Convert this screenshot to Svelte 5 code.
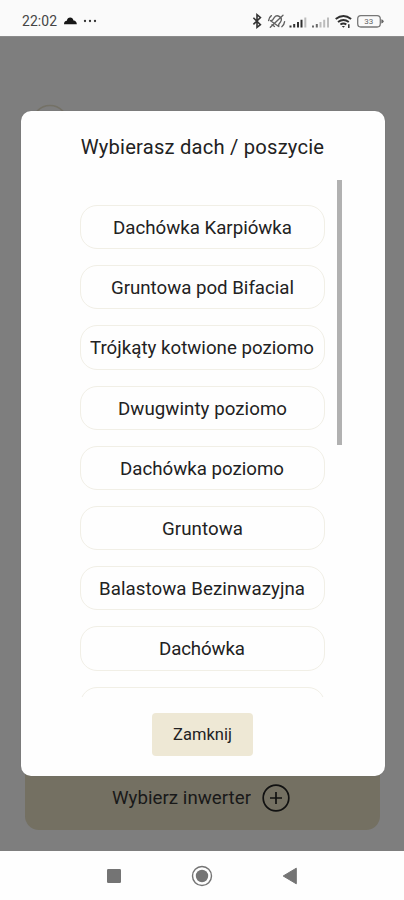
<script>
  const roofs = [
    { name: 'Dachówka Karpiówka', width: 179 },
    { name: 'Gruntowa pod Bifacial', width: 183 },
    { name: 'Trójkąty kotwione poziomo', width: 224 },
    { name: 'Dwugwinty poziomo', width: 169 },
    { name: 'Dachówka poziomo', width: 164 },
    { name: 'Gruntowa', width: 81 },
    { name: 'Balastowa Bezinwazyjna', width: 206 },
    { name: 'Dachówka', width: 86 },
    { name: '', width: 0 }
  ];
</script>

<div class="phone">
  <header class="status">
    <span class="clock">22:02</span>
    <svg class="cloud" width="13" height="8" viewBox="0 0 13 8"><path d="M0 7.3C0 5 1 4 2.8 3.8 3.3 1.5 4.4.5 6.2.5S9 1.5 9.5 3.4C11.7 3.6 12.8 5 12.8 7.3Z" fill="#171717" /></svg>
    <svg class="dots" width="14" height="4" viewBox="0 0 14 4" fill="#333"><circle cx="2" cy="2" r="1.15" /><circle cx="7" cy="2" r="1.15" /><circle cx="12" cy="2" r="1.15" /></svg>
    <svg class="system" width="134" height="20" viewBox="0 0 134 20" fill="none">
      <path d="M3.4 6.7 10.4 13.6 7 16.4V3.7L10.4 6.5 3.4 13.4" stroke="#333" stroke-width="1.6" />
      <g stroke="#606060" stroke-width="1.35" stroke-linecap="round" stroke-linejoin="round">
        <path transform="rotate(35 26.5 10)" d="M21.5 13.2H31.5L30.3 11.5V8.3C30.3 3.5 22.7 3.5 22.7 8.3V11.5ZM25 15.6H28" />
        <path d="M20.3 16.2 33 4.2M18.6 9.6Q18.8 6.4 21.4 4.6M34.6 10.6Q34.2 13.8 31.8 15.7" />
      </g>
      <g stroke-width="2">
        <path d="M40.5 16.5V14.5M44.2 16.5V13M48 16.5V11M51.5 16.5V8.7" stroke="#303030" />
        <path d="M55.3 16.5V6.5" stroke="#bcbcbc" />
        <path d="M63 16.5V14.5M66.8 16.5V13" stroke="#686868" />
        <path d="M70.5 16.5V11M74.2 16.5V8.7M78 16.5V6.5" stroke="#bcbcbc" />
      </g>
      <g stroke="#303030" stroke-width="1.9">
        <path d="M85.7 8.1Q93.5 1.9 101.1 8.1M88 11Q93.5 6.9 98.8 11M90.4 13.6Q93.5 11.3 96.3 13.6" />
        <path d="M91.8 15H95L93.4 16.7Z" fill="#303030" stroke="none" />
        <path d="M98.8 13.3V16.9" stroke-width="1.5" />
      </g>
      <rect x="107.7" y="4.7" width="22.6" height="11.3" rx="3.2" stroke="#777" stroke-width="1.3" />
      <path d="M131.3 8.2Q133.6 8.6 133.6 10.3T131.3 12.4Z" fill="#666" />
      <text x="118.7" y="13.2" text-anchor="middle" font-size="8" fill="#666">33</text>
    </svg>
  </header>

  <main>
    <svg class="hint" width="50" height="36" viewBox="0 0 50 36"><circle cx="25" cy="19" r="17.5" fill="none" stroke="#747166" stroke-width="1.5" /></svg>
    <div class="inverter">
      <svg class="label" width="139" height="28"><text x="0" y="20" textLength="139" font-size="18.7" fill="#191919">Wybierz inwerter</text></svg>
      <svg width="28" height="28" viewBox="0 0 28 28" fill="none" stroke="#111"><circle cx="14" cy="14" r="12.8" stroke-width="1.7" /><path d="M8 14H20M14 8V20" stroke-width="1.7" /></svg>
    </div>
  </main>

  <nav>
    <svg width="16" height="16"><rect x="1" y="1" width="14" height="14" rx="1.2" fill="#747474" /></svg>
    <svg width="22" height="22" viewBox="0 0 22 22"><circle cx="11" cy="11" r="9.5" fill="none" stroke="#747474" stroke-width="1.4" /><circle cx="11" cy="11" r="6.2" fill="#747474" /></svg>
    <svg width="16" height="18" viewBox="0 0 16 18"><path d="M14.3 1.2V16.8L1.2 9Z" fill="#747474" stroke="#747474" stroke-linejoin="round" /></svg>
  </nav>

  <section class="modal">
    <h1>Wybierasz dach / poszycie</h1>
    <div class="scroll">
      <div class="list">
        {#each roofs as roof}
          <button class="roof">
            {#if roof.name}
              <svg width={roof.width} height="28"><text x="0" y="20.6" textLength={roof.width} font-size="18.7" fill="#222">{roof.name}</text></svg>
            {/if}
          </button>
        {/each}
      </div>
      <div class="thumb"></div>
    </div>
    <button class="close">Zamknij</button>
  </section>
</div>

<style>
  :global(body) { margin: 0; overflow: hidden; }
  * { box-sizing: border-box; }
  .phone { position: relative; width: 404px; height: 900px; display: flex; flex-direction: column; overflow: hidden; background: #7e7e7e; font-family: Roboto, "Noto Sans", sans-serif; color: #222; }
  svg { display: block; flex-shrink: 0; }
  .status { height: 36px; background: #fafafa; display: flex; align-items: center; padding: 5px 20px 0 22px; box-shadow: 0 1px 0 #8b8b8b; }
  .clock { width: 36px; font-size: 13.9px; letter-spacing: .1px; color: #444; }
  .cloud { margin-left: 6px; }
  .dots { margin-left: 6px; }
  .system { margin-left: auto; }
  main { flex: 1; display: flex; flex-direction: column; justify-content: space-between; padding: 68px 24px 21px 25px; }
  .inverter { height: 65px; border-radius: 0 0 14px 14px; background: #747062; display: flex; align-items: center; justify-content: center; gap: 11px; padding-right: 3px; }
  nav { height: 49px; background: #fefefe; display: flex; justify-content: center; align-items: center; gap: 69px; }
  .modal { position: absolute; left: 20.5px; top: 111px; width: 364px; height: 665px; background: #fefefe; border-radius: 10px; display: flex; flex-direction: column; align-items: center; box-shadow: 0 0 1px #666; }
  h1 { margin: 21px 0 0; height: 30px; line-height: 30px; font-size: 20.2px; font-weight: 400; letter-spacing: .2px; color: #222; white-space: nowrap; }
  .scroll { margin-top: 18px; width: 364px; height: 517px; display: flex; overflow: hidden; padding-left: 59.5px; }
  .list { width: 245px; display: flex; flex-direction: column; gap: 16px; padding-top: 25px; }
  .roof { flex: none; width: 245px; height: 44.2px; border: 1.5px solid #f1efe6; border-radius: 17px; background: #fefefe; display: flex; align-items: center; justify-content: center; padding: 0 1px 0 0; font-family: inherit; }
  .thumb { margin-left: 12px; width: 4.5px; height: 265px; background: #b1b1b1; }
  .close { margin-top: 16px; width: 101px; height: 43px; border: 0; border-radius: 4px; background: #eee8d5; color: #222; font: 400 16.5px Roboto, "Noto Sans", sans-serif; }
</style>
